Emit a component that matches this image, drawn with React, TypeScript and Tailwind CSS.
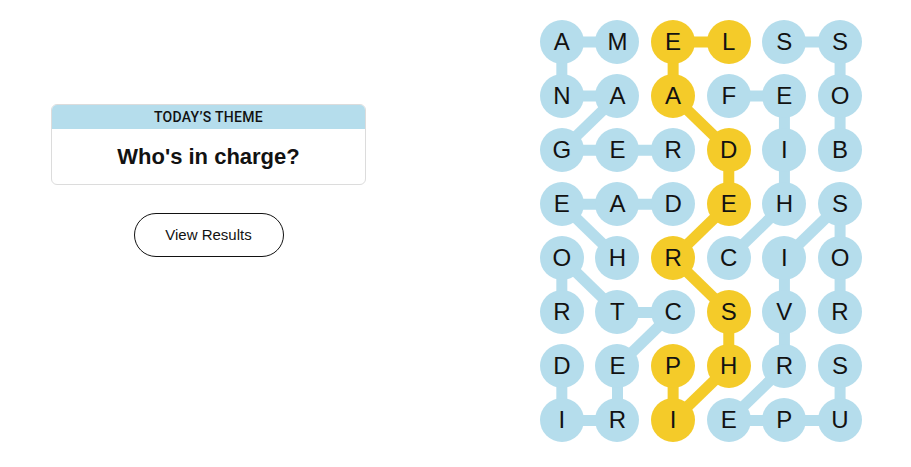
import React from "react";

const BLUE = "#b5ddec";
const YELLOW = "#f4cb29";

const GRID = [
  "AMELSS",
  "NAAFEO",
  "GERDIB",
  "EADEHS",
  "OHRCIO",
  "RTCSVR",
  "DEPHRS",
  "IRIEPU",
];

const CW = 55.65;
const CH = 54.07;

// words as lists of [row, col], in spelling order
const WORDS: { cells: [number, number][]; spangram?: boolean }[] = [
  { cells: [[0, 1], [0, 0], [1, 0], [1, 1], [2, 0], [2, 1], [2, 2]] }, // MANAGER
  {
    cells: [[0, 3], [0, 2], [1, 2], [2, 3], [3, 3], [4, 2], [5, 3], [6, 3], [7, 2], [6, 2]],
    spangram: true,
  }, // LEADERSHIP
  { cells: [[2, 5], [1, 5], [0, 5], [0, 4]] }, // BOSS
  { cells: [[4, 3], [3, 4], [2, 4], [1, 4], [1, 3]] }, // CHIEF
  { cells: [[4, 1], [3, 0], [3, 1], [3, 2]] }, // HEAD
  { cells: [[6, 5], [7, 5], [7, 4], [7, 3], [6, 4], [5, 4], [4, 4], [3, 5], [4, 5], [5, 5]] }, // SUPERVISOR
  { cells: [[6, 0], [7, 0], [7, 1], [6, 1], [5, 2], [5, 1], [4, 0], [5, 0]] }, // DIRECTOR
];

const colorOf = new Map<string, string>();
WORDS.forEach((w) =>
  w.cells.forEach(([r, c]) => colorOf.set(`${r}-${c}`, w.spangram ? YELLOW : BLUE))
);

const cx = (c: number) => CW / 2 + CW * c;
const cy = (r: number) => CH / 2 + CH * r;

function Board() {
  return (
    <div className="relative ml-[117px] mt-[15px] w-[333.9px] h-[432.56px]">
      <svg className="absolute inset-0" width={333.9} height={432.56}>
        {WORDS.map((w, i) =>
          w.cells.slice(1).map(([r, c], j) => {
            const [pr, pc] = w.cells[j];
            return (
              <line
                key={`${i}-${j}`}
                x1={cx(pc)}
                y1={cy(pr)}
                x2={cx(c)}
                y2={cy(r)}
                stroke={w.spangram ? YELLOW : BLUE}
                strokeWidth={11}
              />
            );
          })
        )}
      </svg>
      <div className="relative grid grid-cols-[repeat(6,55.65px)] grid-rows-[repeat(8,54.07px)]">
        {GRID.map((row, r) =>
          row.split("").map((ch, c) => (
            <div key={`${r}-${c}`} className="flex items-center justify-center">
              <div
                className="w-[44px] h-[44px] rounded-full flex items-center justify-center text-[24px] leading-none text-[#121212]"
                style={{ backgroundColor: colorOf.get(`${r}-${c}`) }}
              >
                {ch}
              </div>
            </div>
          ))
        )}
      </div>
    </div>
  );
}

export default function App() {
  return (
    <div
      className="w-[911px] h-[467px] bg-white flex text-[#121212]"
      style={{ fontFamily: '"Liberation Sans", Arial, sans-serif' }}
    >
      <div className="w-[417px] flex flex-col items-center pt-[104px]">
        <div className="w-[315px] h-[81px] border border-[#dcdcdc] rounded-[6px] overflow-hidden flex flex-col">
          <div className="h-[24px] bg-[#b5ddec] flex items-center justify-center text-[14px] font-medium tracking-[0.3px] font-['Roboto',sans-serif]">
            TODAY’S THEME
          </div>
          <div className="flex-1 flex items-center justify-center text-[22px] font-bold">
            Who's in charge?
          </div>
        </div>
        <button className="mt-[28px] w-[150px] h-[44px] rounded-full border border-[#121212] text-[15px] bg-white">
          View Results
        </button>
      </div>
      <Board />
    </div>
  );
}
